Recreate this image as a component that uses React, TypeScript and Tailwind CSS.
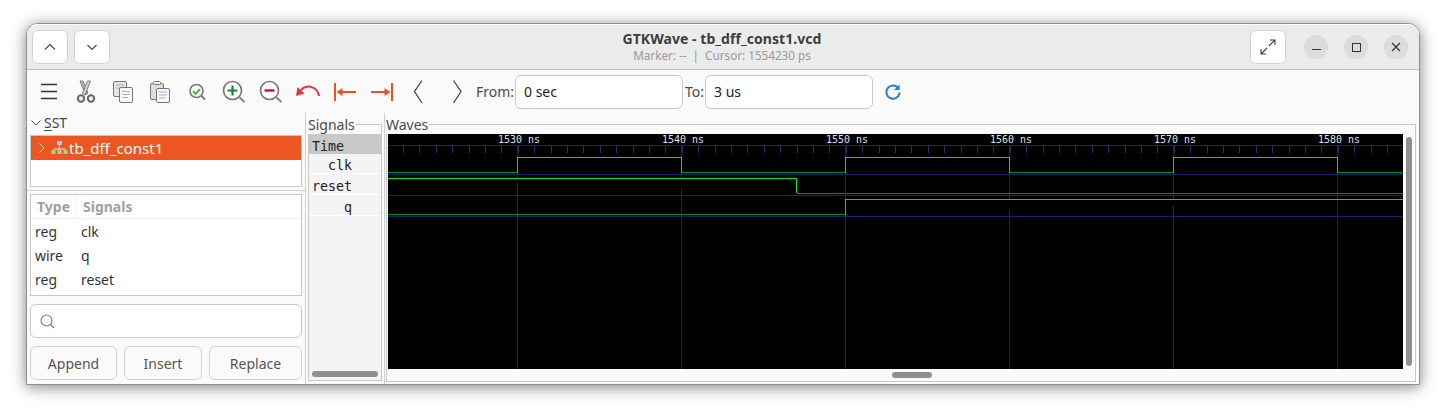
const UI_FONT = "font-['Noto_Sans',sans-serif]";

const majors = [517, 681, 845, 1009, 1173, 1337];
const labels = ["1530 ns", "1540 ns", "1550 ns", "1560 ns", "1570 ns", "1580 ns"];

function ToolIcon({ x, children }: { x: number; children: React.ReactNode }) {
  // drawn in window coordinates, the viewBox selects this button's cell
  return (
    <div className="h-[43px] w-[37px] shrink-0">
      <svg width="37" height="43" viewBox={`${x} 70 37 43`} fill="none">
        {children}
      </svg>
    </div>
  );
}

function Toolbar() {
  return (
    <div className="flex h-[43px] shrink-0 items-center pl-[4px]">
      <ToolIcon x={31}>
        <path d="M41 84.5h16M41 91.5h16M41 98.5h16" stroke="#333" strokeWidth="1.4" />
      </ToolIcon>
      <ToolIcon x={68}>
        <path d="M80 81L83 81L88 93L85.5 95Z" fill="#b5b5b5" stroke="#666" strokeWidth="0.8" />
        <path d="M90.5 81L87.5 81L82.5 93L85 95Z" fill="#d5d5d5" stroke="#666" strokeWidth="0.8" />
        <circle cx="81" cy="98.5" r="3.2" stroke="#666" strokeWidth="2" fill="#eee" />
        <circle cx="91" cy="98.5" r="3.2" stroke="#666" strokeWidth="2" fill="#eee" />
      </ToolIcon>
      <ToolIcon x={105}>
        <rect x="113.5" y="81.5" width="13" height="15" rx="1.5" fill="#e6e6e6" stroke="#777" />
        <path d="M116 85h8M116 88h8" stroke="#aaa" />
        <rect x="119.5" y="87.5" width="13" height="15" rx="1.5" fill="#f8f8f8" stroke="#777" />
        <path d="M122 91.5h8M122 94.5h8M122 97.5h6" stroke="#a9a9ee" />
      </ToolIcon>
      <ToolIcon x={142}>
        <rect x="150.5" y="83.5" width="13" height="16" rx="1.5" fill="#ddd" stroke="#777" />
        <rect x="153.5" y="81.5" width="7" height="3" rx="1" fill="#f2f2f2" stroke="#777" />
        <rect x="156.5" y="88.5" width="13" height="14" rx="1.5" fill="#f8f8f8" stroke="#777" />
        <path d="M159 92h8M159 95h8M159 98h6" stroke="#a9a9ee" />
      </ToolIcon>
      <ToolIcon x={179}>
        <circle cx="196.5" cy="91" r="6.5" fill="#fff" stroke="#777" strokeWidth="1.6" />
        <path d="M193 91l2.5 3l4.5-5" stroke="#3aa52a" strokeWidth="1.8" />
        <path d="M201.5 96l3.5 3.5" stroke="#777" strokeWidth="1.8" />
      </ToolIcon>
      <ToolIcon x={216}>
        <circle cx="232.5" cy="90.5" r="9" fill="#fff" stroke="#7c7c72" strokeWidth="1.7" />
        <path d="M232.5 85.5v10M227.5 90.5h10" stroke="#0d8a2d" strokeWidth="2.2" />
        <path d="M239 97l5.5 5" stroke="#8a8a80" strokeWidth="2.2" />
      </ToolIcon>
      <ToolIcon x={253}>
        <circle cx="269.5" cy="90.5" r="9" fill="#fff" stroke="#7c7c72" strokeWidth="1.7" />
        <path d="M264.5 90.5h10" stroke="#c5103a" strokeWidth="2.4" />
        <path d="M276 97l5.5 5" stroke="#8a8a80" strokeWidth="2.2" />
      </ToolIcon>
      <ToolIcon x={290}>
        <path d="M319 96C318 88 308 83 301 90" stroke="#ee2f4c" strokeWidth="2" />
        <path d="M296 96L297.5 87L304.5 93.5Z" fill="#ee2f4c" />
      </ToolIcon>
      <ToolIcon x={327}>
        <path d="M335 83v18" stroke="#f0501e" strokeWidth="2" />
        <path d="M342 92h14" stroke="#f0501e" strokeWidth="2" />
        <path d="M336.5 92l6-4v8z" fill="#f0501e" />
      </ToolIcon>
      <ToolIcon x={364}>
        <path d="M392 83v18" stroke="#f0501e" strokeWidth="2" />
        <path d="M371 92h14" stroke="#f0501e" strokeWidth="2" />
        <path d="M390.5 92l-6-4v8z" fill="#f0501e" />
      </ToolIcon>
      <ToolIcon x={401}>
        <path d="M422 80.5L414.5 91.5L422 103" stroke="#444" strokeWidth="1.3" />
      </ToolIcon>
      <ToolIcon x={438}>
        <path d="M453.5 80.5L461 91.5L453.5 103" stroke="#444" strokeWidth="1.3" />
      </ToolIcon>
      <span className="ml-[1px] w-[39px] text-[14px] text-[#4a4a4a]">From:</span>
      <div className="flex h-[34px] w-[168px] items-center rounded-[6px] border border-[#c9c9c9] bg-white pl-[8px] text-[14px] text-[#222]">
        0 sec
      </div>
      <span className="ml-[2px] w-[20px] text-[14px] text-[#4a4a4a]">To:</span>
      <div className="flex h-[34px] w-[168px] items-center rounded-[6px] border border-[#c9c9c9] bg-white pl-[8px] text-[14px] text-[#222]">
        3 us
      </div>
      <svg className="ml-[11px]" width="18" height="18" viewBox="0 0 18 18" fill="none">
        <path d="M14.6 5.6A6.6 6.6 0 1 0 15.6 9.5" stroke="#2a80d2" strokeWidth="2" />
        <path d="M15.6 1.5v5.6h-5.6z" fill="#2a80d2" />
      </svg>
    </div>
  );
}

function Header() {
  return (
    <div className="grid h-[46px] shrink-0 grid-cols-[1fr_auto_1fr] items-center rounded-t-[11px] border-b border-[#bdbdbd] border-t border-t-white bg-[#ebebeb] pl-[5px] pr-[11px]">
      <div className="flex gap-[6px]">
        <div className="flex h-[34px] w-[36px] items-center justify-center rounded-[6px] border border-[#d2d2d2] bg-white">
          <svg width="12" height="8" viewBox="0 0 12 8" fill="none">
            <path d="M1 6.5L6 1.5L11 6.5" stroke="#444" strokeWidth="1.1" />
          </svg>
        </div>
        <div className="flex h-[34px] w-[36px] items-center justify-center rounded-[6px] border border-[#d2d2d2] bg-white">
          <svg width="12" height="8" viewBox="0 0 12 8" fill="none">
            <path d="M1.5 2L6 6.5L10.5 2" stroke="#444" strokeWidth="1.1" />
          </svg>
        </div>
      </div>
      <div className="ml-[4px] flex flex-col items-center">
        <div className="-translate-y-px text-[14px] font-bold leading-[17px] tracking-[0.05px] text-[#3d3d3d]">
          GTKWave - tb_dff_const1.vcd
        </div>
        <div className="text-[11.7px] leading-[15px] text-[#999]">Marker: -- &nbsp;|&nbsp; Cursor: 1554230 ps</div>
      </div>
      <div className="flex items-center justify-end">
        <div className="mr-[18px] flex h-[34px] w-[36px] items-center justify-center rounded-[6px] border border-[#d2d2d2] bg-white">
          <svg width="16" height="16" viewBox="0 0 16 16" fill="none" stroke="#3c3c3c" strokeWidth="1.1">
            <path d="M9 7L15 1M10 1h5v5M7 9L1 15M1 10v5h5" />
          </svg>
        </div>
        <div className="flex h-[24px] w-[24px] items-center justify-center rounded-full bg-[#dcdcdc]">
          <div className="mt-[4px] h-[1px] w-[9px] bg-[#333]" />
        </div>
        <div className="ml-[16px] flex h-[24px] w-[24px] items-center justify-center rounded-full bg-[#dcdcdc]">
          <div className="h-[9px] w-[9px] border border-[#333]" />
        </div>
        <div className="ml-[16px] flex h-[24px] w-[24px] items-center justify-center rounded-full bg-[#dcdcdc]">
          <svg width="10" height="10" viewBox="0 0 10 10" fill="none">
            <path d="M1 1l8 8M9 1l-8 8" stroke="#333" strokeWidth="1.2" />
          </svg>
        </div>
      </div>
    </div>
  );
}

function LeftPane() {
  return (
    <div className="flex w-[278px] shrink-0 flex-col">
      <div className="flex h-[22px] items-center pb-[3px] pl-[4px] text-[14px] text-[#444]">
        <svg width="10" height="6" viewBox="0 0 10 6" fill="none">
          <path d="M0.5 0.5L5 5L9.5 0.5" stroke="#555" />
        </svg>
        <span className="ml-[3px] underline underline-offset-2">S</span>
        <span>ST</span>
      </div>
      <div className="ml-[3px] h-[52px] w-[272px] border border-[#c8c8c8] bg-white">
        <div className="flex h-[24px] items-center bg-[#ec5622] pl-[7px] text-[15px] text-white">
          <svg width="8" height="12" viewBox="0 0 8 12" fill="none">
            <path d="M1.5 1.5L6 6L1.5 10.5" stroke="#fff" opacity="0.8" />
          </svg>
          <svg className="ml-[5px]" width="17" height="14" viewBox="0 0 17 14" fill="none">
            <rect x="6" y="0" width="5" height="4" fill="#a8cdf2" />
            <path d="M8.5 4v4M2.5 8h12" stroke="#eee" />
            <rect x="0.5" y="9" width="4" height="4" fill="#9dd88a" />
            <rect x="6.5" y="9" width="4" height="4" fill="#9dd88a" />
            <rect x="12.5" y="9" width="4" height="4" fill="#9dd88a" />
          </svg>
          <span className="ml-[1px]">tb_dff_const1</span>
        </div>
      </div>
      <div className="mt-[3px] h-[1px] bg-[#cfcfcf]" />
      <div className="ml-[3px] mt-[3px] h-[102px] w-[272px] border border-[#c8c8c8] bg-white text-[14px] text-[#333]">
        <div className="flex h-[24px] items-center border-b border-[#f0f0f0] font-bold text-[#a0a0a0]">
          <span className="h-full w-[46px] border-r border-[#f0f0f0] pl-[6px] leading-[24px]">Type</span>
          <span className="pl-[6px]">Signals</span>
        </div>
        {[
          ["reg", "clk"],
          ["wire", "q"],
          ["reg", "reset"],
        ].map(([type, name]) => (
          <div key={name} className="flex h-[24px] items-center">
            <span className="w-[46px] pl-[4px]">{type}</span>
            <span className="pl-[4px]">{name}</span>
          </div>
        ))}
      </div>
      <div className="ml-[3px] mt-[8px] flex h-[34px] w-[272px] items-center rounded-[6px] border border-[#c9c9c9] bg-white pl-[9px]">
        <svg width="15" height="15" viewBox="0 0 15 15" fill="none" stroke="#777" strokeWidth="1.1">
          <circle cx="6.5" cy="6.5" r="5.5" />
          <path d="M10.5 10.5L14 14" />
        </svg>
      </div>
      <div className="ml-[3px] mt-[8px] flex h-[34px] w-[272px] gap-[7px] text-[14px] text-[#555]">
        <div className="flex w-[87px] items-center justify-center rounded-[6px] border border-[#d2d2d2]">Append</div>
        <div className="flex w-[78px] items-center justify-center rounded-[6px] border border-[#d2d2d2]">Insert</div>
        <div className="flex w-[93px] items-center justify-center rounded-[6px] border border-[#d2d2d2]">Replace</div>
      </div>
    </div>
  );
}

function SignalsPane() {
  const rows = ["  clk", "reset", "    q"];
  return (
    <div className="h-full w-[80px] shrink-0 border-x border-[#cfcfcf] pl-[2px] pt-[11px]">
      <div className="relative flex h-[257px] w-[74px] flex-col border border-[#c8c8c8] pt-[9px]">
        <span className="absolute left-[-1px] top-[-10px] bg-[#fafafa] pr-[1px] text-[14px] leading-[19px] text-[#4a4a4a]">
          Signals
        </span>
        <div className="flex flex-1 flex-col bg-[#f4f4f4] font-['DejaVu_Sans_Mono',monospace] text-[13.33px] text-[#222]">
          <div className="h-[20px] whitespace-pre bg-[#c8c8c8] pl-[3px] pt-[2px] leading-[22px]">Time</div>
          {rows.map((r, i) => (
            <div
              key={r}
              className={`${i === 0 ? "h-[20px] pt-[1px]" : "h-[21px] pt-[2px]"} whitespace-pre border-b border-white pl-[3px] leading-[21px]`}
            >
              {r}
            </div>
          ))}
          <div className="mt-auto mb-[3px] ml-[3px] h-[6px] w-[66px] rounded-full bg-[#8f8f8f]" />
        </div>
      </div>
    </div>
  );
}

function WaveCanvas() {
  return (
    <svg width="1015" height="235" viewBox="388 134 1015 235" className="block shrink-0 bg-black" shapeRendering="crispEdges">
      {[145, 174, 195, 216].map((y) => (
        <path key={y} d={`M388 ${y + 0.5}H1404`} stroke="#20206e" />
      ))}
      {Array.from({ length: 62 }, (_, i) => 403 + Math.round(i * 16.4)).map((x) => (
        <path key={x} d={`M${x + 0.5} 146V153`} stroke="#2a2a80" />
      ))}
      {majors.map((x) => (
        <path key={x} d={`M${x + 0.5} 145V369`} stroke="#20206e" />
      ))}
      {/* clk */}
      <path d="M388 172.5H517.5M681.5 172.5H845.5M1009.5 172.5H1173.5M1337.5 172.5H1404" stroke="#0a8f0a" />
      <path d="M517.5 172.5V157.5H681.5V172.5M845.5 172.5V157.5H1009.5V172.5M1173.5 172.5V157.5H1337.5V172.5" stroke="#22d022" />
      {/* reset */}
      <path d="M388 178.5H796.5V193" stroke="#10e810" />
      <path d="M796.5 193.5H1404" stroke="#0a8f0a" />
      {/* q */}
      <path d="M388 214.5H845.5" stroke="#0a8f0a" />
      <path d="M845.5 214.5V199.5H1404" stroke="#22d022" />
      {majors.map((x, i) => (
        <text key={x} x={x + 2} y={143} textAnchor="middle" fill="#dfe3e8" fontSize="10" fontFamily="'DejaVu Sans Mono', monospace" shapeRendering="auto">
          {labels[i]}
        </text>
      ))}
    </svg>
  );
}

function WavesPane() {
  return (
    <div className="flex-1 pl-[1px] pt-[11px]">
      <div className="relative h-[258px] w-[1030px] border border-[#c8c8c8] pl-[1px] pt-[9px]">
        <span className="absolute left-[-1px] top-[-10px] bg-[#fafafa] pr-[1px] text-[14px] leading-[19px] text-[#4a4a4a]">
          Waves
        </span>
        <div className="flex h-[235px]">
          <WaveCanvas />
          <div className="ml-[3px] mt-[3px] h-[229px] w-[6px] rounded-full bg-[#8f8f8f]" />
        </div>
        <div className="ml-[504px] mt-[3px] h-[6px] w-[40px] rounded-full bg-[#8f8f8f]" />
      </div>
    </div>
  );
}

export default function App() {
  return (
    <div className={`h-[414px] w-[1445px] overflow-hidden bg-white pl-[26px] pt-[23px] ${UI_FONT}`}>
      <div className="flex h-[362px] w-[1394px] flex-col rounded-t-[12px] border border-[#8f8f8f] bg-[#fafafa] shadow-[0_2px_15px_rgba(0,0,0,0.5)]">
        <Header />
        <Toolbar />
        <div className="flex flex-1">
          <LeftPane />
          <SignalsPane />
          <WavesPane />
        </div>
      </div>
    </div>
  );
}
